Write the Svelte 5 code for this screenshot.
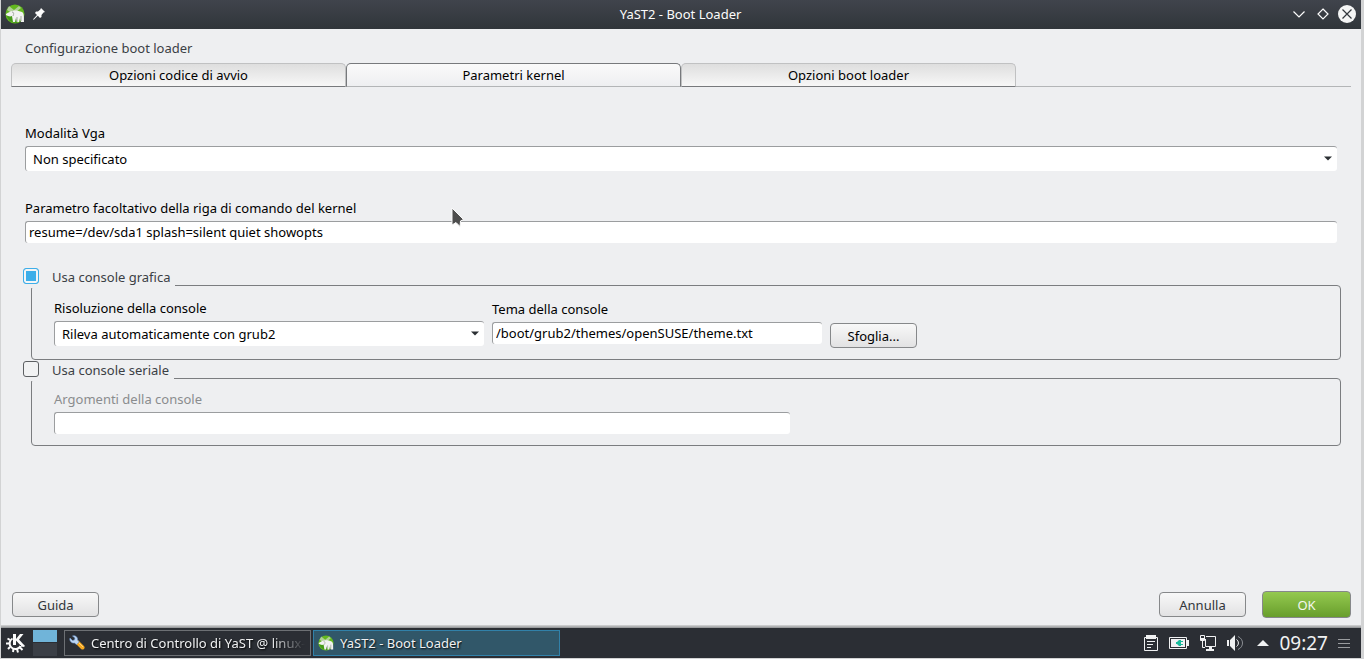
<script lang="ts">
  const tabs = ["Opzioni codice di avvio", "Parametri kernel", "Opzioni boot loader"];

  let activeTab = $state(1);
  let vgaMode = $state("Non specificato");
  let kernelParams = $state("resume=/dev/sda1 splash=silent quiet showopts");
  let useGraphical = $state(true);
  let resolution = $state("Rileva automaticamente con grub2");
  let theme = $state("/boot/grub2/themes/openSUSE/theme.txt");
  let useSerial = $state(false);
  let serialArgs = $state("");
</script>

{#snippet yastIcon(size: number)}
  <svg width={size} height={size} viewBox="0 0 20 20" aria-hidden="true">
    <circle cx="10" cy="10" r="9.5" fill="#63b81f" />
    <path d="M2 12C3 17 8 19 12 19L12 12Z" fill="#459a18" />
    <path d="M4 2L9 6L14 2L16 4L11 8L5 8L2 6Z" fill="#c3d6b4" opacity="0.8" />
    <path
      d="M1 10C3 9 5 7 8 7C10 6 14 7 17 8C19 9 19 12 19 18H16L15 14L14 18H12L11 14L10 18H8L7 12C5 13 3 12 1 11Z"
      fill="#f1f2f0"
    />
    <path d="M7 8C9 8 9 10 8 12M12 13V18M16 12V17" stroke="#a4aaa1" fill="none" />
  </svg>
{/snippet}

{#snippet comboArrow()}
  <svg class="combo-arrow" width="8" height="5" viewBox="0 0 8 5" aria-hidden="true">
    <path d="M0 0.5H8L4 4.5Z" fill="#2b2f33" />
  </svg>
{/snippet}

<div class="desktop">
  <header class="titlebar">
    <div class="title-side">
      {@render yastIcon(20)}
      <button class="title-btn pin" aria-label="Su tutti i desktop">
        <svg width="12" height="12" viewBox="0 0 12 12">
          <path d="M8 0L12 4L10.5 4.5L8.5 7L8.5 9L7 10L4.8 7.8L1 11.5L0 11.8L0.5 10.8L4 7L2 5L3 3.5H5L7.3 1.5Z" fill="#fcfcfc" />
        </svg>
      </button>
    </div>
    <h1>YaST2 - Boot Loader</h1>
    <div class="title-side right">
      <button class="title-btn" aria-label="Minimizza">
        <svg width="18" height="18" viewBox="0 0 18 18">
          <path d="M3.5 6.5L9 12L14.5 6.5" stroke="#fcfcfc" stroke-width="1.2" fill="none" />
        </svg>
      </button>
      <button class="title-btn" aria-label="Massimizza">
        <svg width="18" height="18" viewBox="0 0 18 18">
          <path d="M9 4L14 9L9 14L4 9Z" stroke="#fcfcfc" stroke-width="1.2" fill="none" />
        </svg>
      </button>
      <button class="title-btn" aria-label="Chiudi">
        <svg width="18" height="18" viewBox="0 0 18 18">
          <circle cx="9" cy="9" r="9" fill="#f4f5f5" />
          <path d="M4.5 4.5L13.5 13.5M13.5 4.5L4.5 13.5" stroke="#31363b" stroke-width="1.2" />
        </svg>
      </button>
    </div>
  </header>

  <main>
    <h2>Configurazione boot loader</h2>

    <div class="tabs" role="tablist">
      {#each tabs as tab, index}
        <button
          class="tab"
          class:active={index === activeTab}
          role="tab"
          aria-selected={index === activeTab}
          onclick={() => (activeTab = index)}
        >
          {tab}
        </button>
      {/each}
    </div>

    <div class="panel" role="tabpanel">
      <div class="field">
        <label for="vga">Modalità Vga</label>
        <div class="combo">
          <select id="vga" bind:value={vgaMode}>
            <option>Non specificato</option>
          </select>
          {@render comboArrow()}
        </div>
      </div>

      <div class="field">
        <label for="params">Parametro facoltativo della riga di comando del kernel</label>
        <input id="params" type="text" bind:value={kernelParams} />
      </div>

      <fieldset class="group graphical">
        <legend>
          <input id="use-graphical" type="checkbox" bind:checked={useGraphical} />
          <label for="use-graphical">Usa console grafica</label>
        </legend>
        <div class="group-row">
          <div class="field resolution">
            <label for="resolution">Risoluzione della console</label>
            <div class="combo">
              <select id="resolution" bind:value={resolution} disabled={!useGraphical}>
                <option>Rileva automaticamente con grub2</option>
              </select>
              {@render comboArrow()}
            </div>
          </div>
          <div class="field theme">
            <label for="theme">Tema della console</label>
            <input id="theme" type="text" bind:value={theme} disabled={!useGraphical} />
          </div>
          <button class="btn browse" disabled={!useGraphical}>Sfoglia...</button>
        </div>
      </fieldset>

      <fieldset class="group serial">
        <legend>
          <input id="use-serial" type="checkbox" bind:checked={useSerial} />
          <label for="use-serial">Usa console seriale</label>
        </legend>
        <div class="field serial-args" class:disabled={!useSerial}>
          <label for="serial-args">Argomenti della console</label>
          <input id="serial-args" type="text" bind:value={serialArgs} disabled={!useSerial} />
        </div>
      </fieldset>
    </div>

    <footer class="actions">
      <button class="btn">Guida</button>
      <span class="spacer"></span>
      <button class="btn">Annulla</button>
      <button class="btn primary">OK</button>
    </footer>

    <!-- Mouse pointer -->
    <svg class="pointer" width="14" height="22" viewBox="0 0 14 22" aria-hidden="true">
      <path d="M1 1V18L5 15.5L9 19.5L9.5 14L12.5 12.5Z" fill="#4d4d4d" stroke="#fafafa" />
    </svg>
  </main>

  <nav class="taskbar">
    <button class="launcher" aria-label="Menu delle applicazioni">
      <svg width="20" height="20" viewBox="0 0 20 20">
        <path
          d="M6.5 5.5C3 7.5 2.8 12 5.3 14.4C8 17 13 16.3 14.6 13"
          stroke="#fcfcfc"
          stroke-width="2"
          fill="none"
        />
        <path
          d="M3.8 6.8L1.5 5.5M3 10.5H0M4 14L2 16M7.5 16L7 19M11 16L12 19.5M14 14.5L16.5 17M15 12.5L18.5 13"
          stroke="#fcfcfc"
          stroke-width="2"
        />
        <path d="M7 1H10V12H7ZM10 6L14 1H17.5L13 6.5L18 12H14.2L10 7.5Z" fill="#fcfcfc" />
      </svg>
    </button>
    <div class="pager" aria-hidden="true"><span></span><span></span></div>
    <button class="task">
      <svg width="16" height="16" viewBox="0 0 16 16" aria-hidden="true">
        <path d="M8 7L13.5 12.5" stroke="#f6a821" stroke-width="4" stroke-linecap="round" />
        <path d="M10 8L14 12" stroke="#ffd27a" />
        <path
          d="M1 3L3.5 5.5L5.5 5L6 3L3.5 1C6 0 9 2 8.5 5L10 7L7.5 9.5L5.5 8C3 8.5 0 6 1 3Z"
          fill="#bcd5f3"
          stroke="#6d97cf"
          stroke-width="0.6"
        />
      </svg>
      <span class="task-label faded">Centro di Controllo di YaST @ linux-</span>
    </button>
    <button class="task current">
      {@render yastIcon(16)}
      <span class="task-label">YaST2 - Boot Loader</span>
    </button>

    <div class="tray">
      <div class="tray-icons">
        <button aria-label="Appunti">
          <svg width="14" height="16" viewBox="0 0 14 16">
            <path d="M0.5 2.5H13.5V15.5H0.5Z" fill="none" stroke="#f0f1f2" />
            <path d="M2 0H12V4H2Z" fill="#f0f1f2" />
            <path d="M3 6.5H11M3 9.5H9M3 12.5H7" stroke="#f0f1f2" />
          </svg>
        </button>
        <button aria-label="Batteria">
          <svg width="20" height="12" viewBox="0 0 20 12">
            <path d="M0.5 0.5H17.5V11.5H0.5Z" fill="none" stroke="#f0f1f2" />
            <path d="M2 2H16V10H2ZM18 3H20V9H18Z" fill="#f0f1f2" />
            <path d="M7 5H8L10 3H12V4H14V5H12V7H14V8H12V9H10L8 7H7Z" fill="#1abc9c" />
          </svg>
        </button>
        <button aria-label="Rete">
          <svg width="16" height="16" viewBox="0 0 16 16">
            <path d="M0.5 0.5H4.5V5.5H0.5ZM2.5 5.5V12.5H5M6 1.5H15.5V11.5H5.5V4" fill="none" stroke="#f0f1f2" />
            <path d="M9 12H12V14H14V16H6V14H9ZM1 3H4V5H1Z" fill="#f0f1f2" />
          </svg>
        </button>
        <button aria-label="Volume">
          <svg width="16" height="16" viewBox="0 0 16 16">
            <path d="M0 5H2V11H0ZM3 5L8 0V16L3 11Z" fill="#f0f1f2" />
            <path d="M9.5 4.5C12 6 12 10 9.5 11.5" stroke="#f0f1f2" fill="none" />
            <path d="M11 1.5C17 4 17 12 11 14.5" stroke="#8b8f94" fill="none" />
          </svg>
        </button>
      </div>
      <button aria-label="Mostra icone nascoste">
        <svg width="12" height="6" viewBox="0 0 12 6">
          <path d="M6 0L12 6H0Z" fill="#f0f1f2" />
        </svg>
      </button>
      <time>09:27</time>
      <button aria-label="Opzioni del pannello">
        <svg width="12" height="11" viewBox="0 0 12 11">
          <path d="M0 1.5H12M0 5.5H12M0 9.5H12" stroke="#9a9c9f" />
        </svg>
      </button>
    </div>
  </nav>
</div>

<style>
  :global(body) {
    background: #d2d3d4;
  }

  .desktop {
    box-sizing: border-box;
    min-height: 100vh;
    display: flex;
    flex-direction: column;
    padding: 0 3px 1px 1px;
    background: #d2d3d4;
    color: #000;
    font-family: "Noto Sans", sans-serif;
    font-size: 13px;
    line-height: 18px;
  }

  button,
  input,
  select {
    box-sizing: border-box;
    margin: 0;
    padding: 0;
    color: inherit;
    font: inherit;
  }

  svg {
    display: block;
    flex: none;
  }

  /* Title bar */
  .titlebar {
    display: flex;
    align-items: center;
    height: 28px;
    padding: 0 5px 1px 4px;
    background: linear-gradient(#40444c, #30353a);
    color: #fcfcfc;
  }

  .title-side {
    flex: 1;
    display: flex;
    align-items: center;
    gap: 8px;
  }

  .title-side.right {
    justify-content: flex-end;
    gap: 6px;
  }

  .title-btn {
    border: none;
    background: none;
  }

  h1 {
    margin: 0;
    font-size: 13px;
    font-weight: 400;
  }

  /* Window content */
  main {
    position: relative;
    flex: 1;
    display: flex;
    flex-direction: column;
    padding: 10px 10px 7px;
    background: #eeeff1;
  }

  h2 {
    margin: 0 14px 6px;
    color: #3b4045;
    font-size: 13px;
    font-weight: 400;
  }

  .tabs {
    display: flex;
    padding-right: 335px;
    background: linear-gradient(#b3b5b7, #b3b5b7) bottom / 100% 1px no-repeat;
  }

  .tab {
    flex: 1;
    height: 24px;
    border: 1px solid #c0c1c2;
    border-bottom-color: #77797c;
    border-radius: 5px 5px 0 0;
    background: linear-gradient(#dedede, #f7f7f7);
  }

  .tab.active {
    border-color: #77797c;
    border-bottom-color: #b3b5b7;
    background: linear-gradient(#fafafa, #eeeff1);
  }

  .panel {
    flex: 1;
    padding: 37px 14px 0;
  }

  .field {
    display: flex;
    flex-direction: column;
    gap: 4px;
  }

  .panel > .field {
    margin-bottom: 28px;
  }

  .field.disabled {
    color: #8a8c8e;
  }

  .combo {
    position: relative;
  }

  select,
  input[type="text"] {
    display: block;
    width: 100%;
    height: 22px;
    padding: 0 3px 2px;
    border: solid #9b9d9f;
    border-width: 1px 0 0 1px;
    border-radius: 3px;
    outline: none;
    background: #fff;
    color: #000;
  }

  select {
    height: 25px;
    padding: 0 20px 0 7px;
    appearance: none;
  }

  .combo-arrow {
    position: absolute;
    top: 10px;
    right: 5px;
    pointer-events: none;
  }

  /* Checkable group boxes */
  .group {
    position: relative;
    min-width: 0;
    margin: 42px -4px 0 6px;
    padding: 13px 22px 11px;
    border: 1px solid #7b7d80;
    border-radius: 4px;
  }

  .group.serial {
    margin-top: 18px;
    padding: 11px 22px;
  }

  legend {
    position: absolute;
    top: -18px;
    left: -9px;
    display: flex;
    gap: 13px;
    padding: 0 5px 2px 0;
    background: #eeeff1;
    color: #3b4045;
  }

  input[type="checkbox"] {
    width: 16px;
    height: 16px;
    border: 1px solid #5c5f62;
    border-radius: 3px;
    background: #f1f2f3;
    appearance: none;
  }

  input[type="checkbox"]:checked {
    border-color: #3daee9;
    background: #3daee9;
    box-shadow: inset 0 0 0 2px #f4f5f6;
  }

  .group-row {
    display: flex;
    gap: 8px;
  }

  .resolution {
    flex: 0 1 430px;
  }

  .theme {
    flex: 0 1 330px;
    padding-top: 1px;
  }

  .serial-args {
    max-width: 736px;
  }

  .btn {
    min-width: 87px;
    height: 25px;
    border: 1px solid #86888a;
    border-radius: 4px;
    background: linear-gradient(#f8f8f8, #e2e2e3);
    color: #31363b;
  }

  .browse {
    margin-top: 24px;
    color: #000;
  }

  .actions {
    display: flex;
    align-items: center;
    padding-left: 1px;
  }

  .spacer {
    flex: 1;
  }

  .primary {
    min-width: 89px;
    height: 27px;
    margin-left: 16px;
    background: linear-gradient(#94c94f, #689e2c);
    color: #f4f8ee;
  }

  .pointer {
    position: absolute;
    top: 178px;
    left: 450px;
  }

  /* Taskbar */
  .taskbar {
    display: flex;
    align-items: center;
    height: 30px;
    padding: 3px 11px 0 0;
    background: linear-gradient(#d6d7d8, #8e9092 3px, #2b2e34 3px);
    color: #f0f1f2;
  }

  .taskbar button {
    border: none;
    background: none;
  }

  .launcher {
    margin: 0 7px 0 5px;
  }

  .pager {
    display: flex;
    flex-direction: column;
    gap: 1px;
    width: 24px;
    margin-right: 7px;
  }

  .pager span {
    height: 13px;
    background: #3b3f46;
  }

  .pager span:first-child {
    height: 12px;
    background: #70b4d9;
  }

  .taskbar .task {
    flex: 0 1 247px;
    min-width: 0;
    height: 26px;
    display: flex;
    align-items: center;
    gap: 6px;
    margin-right: 2px;
    padding: 0 4px;
    border: 1px solid #6d7074;
    text-shadow: 1px 1px 2px #000;
  }

  .taskbar .task.current {
    border-color: #3181a9;
    background: #315769;
  }

  .task-label {
    overflow: hidden;
    white-space: nowrap;
  }

  .faded {
    mask-image: linear-gradient(90deg, #000 84%, transparent);
  }

  .tray {
    flex: 1;
    display: flex;
    align-items: center;
    justify-content: flex-end;
    gap: 10px;
  }

  .tray-icons {
    display: flex;
    align-items: center;
    gap: 11px;
    margin-right: 4px;
  }

  time {
    font-size: 19px;
    line-height: 28px;
  }
</style>
